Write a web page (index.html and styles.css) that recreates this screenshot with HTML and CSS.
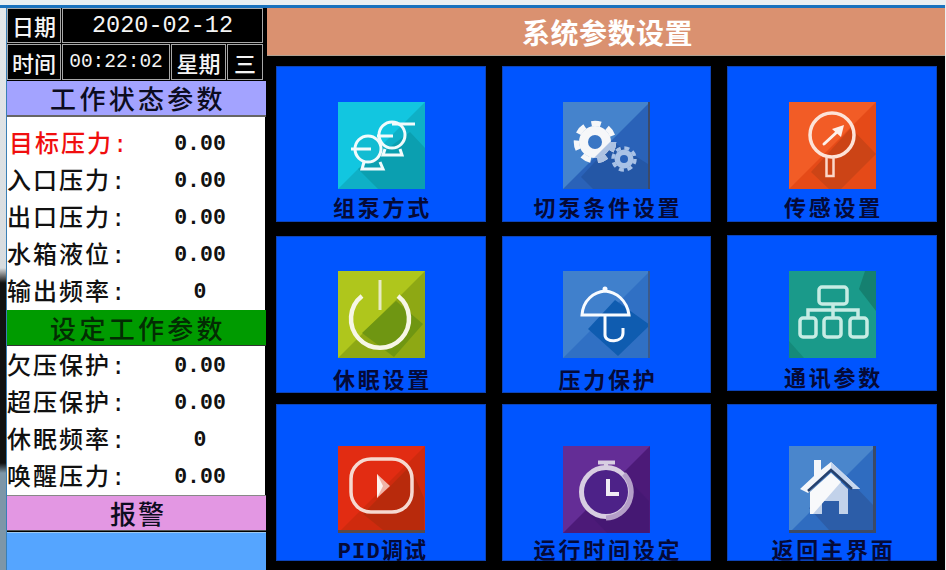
FILE: index.html
```html
<!DOCTYPE html>
<html lang="zh-CN">
<head>
    <meta charset="UTF-8">
    <title>系统参数设置</title>
    <link rel="stylesheet" href="styles.css">
</head>
<body>
    <div class="screen">
        <div class="gutter"></div>
        <div class="side">
            <div class="clock">
                <div class="clock-row row-date">
                    <div class="cell cell-name">日期</div>
                    <div class="cell cell-date">2020-02-12</div>
                </div>
                <div class="clock-row row-time">
                    <div class="cell cell-name">时间</div>
                    <div class="cell cell-time">00:22:02</div>
                    <div class="cell cell-week">星期</div>
                    <div class="cell cell-day">三</div>
                </div>
            </div>
            <div class="band band-purple">工作状态参数</div>
            <div class="params params-first">
                <div class="param"><span class="param-name param-red">目标压力:</span><span class="param-value">0.00</span></div>
                <div class="param"><span class="param-name">入口压力:</span><span class="param-value">0.00</span></div>
                <div class="param"><span class="param-name">出口压力:</span><span class="param-value">0.00</span></div>
                <div class="param"><span class="param-name">水箱液位:</span><span class="param-value">0.00</span></div>
                <div class="param"><span class="param-name">输出频率:</span><span class="param-value">0</span></div>
            </div>
            <div class="band band-green">设定工作参数</div>
            <div class="params">
                <div class="param"><span class="param-name">欠压保护:</span><span class="param-value">0.00</span></div>
                <div class="param"><span class="param-name">超压保护:</span><span class="param-value">0.00</span></div>
                <div class="param"><span class="param-name">休眠频率:</span><span class="param-value">0</span></div>
                <div class="param"><span class="param-name">唤醒压力:</span><span class="param-value">0.00</span></div>
            </div>
            <div class="band band-pink">报警</div>
            <div class="alarm"></div>
        </div>
        <div class="main">
            <h1 class="title">系统参数设置</h1>
            <div class="tiles">
                <div class="tile">
                    <svg class="icon" viewBox="0 0 87 87">
                        <rect width="87" height="87" fill="#0fb0c6"/>
                        <polygon points="0,0 87,0 0,87" fill="#12c6e0"/>
                        <polygon points="20,67 45,50 72,30 87,46 87,87 40,87" fill="#0b9fb0"/>
                        <g fill="none" stroke="#f2fbfc" stroke-width="3">
                            <circle cx="54" cy="33" r="13"/>
                            <path d="M54 22H77M39 34H55"/>
                            <path d="M47 47L45 53H64L62 47"/>
                            <circle cx="30" cy="47" r="13" fill="#12bcd2"/>
                            <path d="M13 47H33"/>
                            <path d="M26 60L24 67H45L42 60"/>
                        </g>
                    </svg>
                    <span class="tile-label">组泵方式</span>
                </div>
                <div class="tile">
                    <svg class="icon" viewBox="0 0 87 87">
                        <defs>
                            <clipPath id="gear-shade"><polygon points="87,0 87,87 0,87"/></clipPath>
                            <g id="gear-big">
                                <circle cx="32" cy="40" r="16"/>
                                <circle cx="32" cy="40" r="18.500" fill="none" stroke="currentColor" stroke-width="5.500" stroke-dasharray="9.500 7.100"/>
                            </g>
                        </defs>
                        <rect width="87" height="87" fill="#2a62b8"/>
                        <polygon points="0,0 87,0 0,87" fill="#4583cc"/>
                        <polygon points="18,75 50,40 85,62 85,87 30,87" fill="#2457a6"/>
                        <rect x="85" width="2" height="87" fill="#3c4a68"/>
                        <use href="#gear-big" fill="#f6f7f9" color="#f6f7f9"/>
                        <use href="#gear-big" fill="#adc2e2" color="#adc2e2" clip-path="url(#gear-shade)"/>
                        <circle cx="32" cy="40" r="7" fill="#3a76c4"/>
                        <circle cx="61" cy="57" r="9.500" fill="#a9c2e6"/>
                        <circle cx="61" cy="57" r="11" fill="none" stroke="#a9c2e6" stroke-width="3.500" stroke-dasharray="5 3.640"/>
                        <circle cx="61" cy="57" r="4" fill="#2a62b8"/>
                    </svg>
                    <span class="tile-label">切泵条件设置</span>
                </div>
                <div class="tile">
                    <svg class="icon" viewBox="0 0 87 87">
                        <rect width="87" height="87" fill="#e54a18"/>
                        <polygon points="0,0 87,0 0,87" fill="#f25c26"/>
                        <polygon points="22,70 62,26 87,52 52,87 40,87" fill="#cc4416"/>
                        <circle cx="43" cy="33" r="22" fill="none" stroke="#fde3d8" stroke-width="3.500"/>
                        <path d="M37.500 55V74H44.500V55" fill="none" stroke="#fbd8ca" stroke-width="2.500"/>
                        <path d="M35 42L48 30" stroke="#fdf0ea" stroke-width="3" stroke-linecap="round"/>
                        <polygon points="55,23 52,35 43,27" fill="#fdf0ea"/>
                    </svg>
                    <span class="tile-label">传感设置</span>
                </div>
                <div class="tile tile-mid">
                    <svg class="icon" viewBox="0 0 87 87">
                        <rect width="87" height="87" fill="#8ea814"/>
                        <polygon points="0,0 87,0 0,87" fill="#afc61c"/>
                        <polygon points="24,62 58,30 85,53 56,86" fill="#6f9612"/>
                        <path d="M24 25A29 29 0 1 0 60 25" fill="none" stroke="#f6f6e6" stroke-width="4.500"/>
                        <path d="M42 9V39" stroke="#e8ebc4" stroke-width="3"/>
                    </svg>
                    <span class="tile-label">休眠设置</span>
                </div>
                <div class="tile tile-mid">
                    <svg class="icon" viewBox="0 0 87 87">
                        <rect width="87" height="87" fill="#3070c4"/>
                        <polygon points="0,0 87,0 0,87" fill="#4080cc"/>
                        <polygon points="52,29 87,54 55,85 25,58" fill="#0f5cb0"/>
                        <rect x="85" width="2" height="87" fill="#3c5a8a"/>
                        <path d="M19 44C20 29 31 21 42 20C53 21 64 29 66 44Z" fill="none" stroke="#f8fbff" stroke-width="3"/>
                        <circle cx="42" cy="18" r="2.500" fill="#f8fbff"/>
                        <path d="M42 44V64C42 72 60 72 60 62V57" fill="none" stroke="#f8fbff" stroke-width="3"/>
                    </svg>
                    <span class="tile-label">压力保护</span>
                </div>
                <div class="tile tile-mid tile-short">
                    <svg class="icon" viewBox="0 0 87 87">
                        <rect width="87" height="87" fill="#1a9a8a"/>
                        <polygon points="87,0 87,40 70,18 76,0" fill="#158070"/>
                        <polygon points="0,70 15,87 0,87" fill="#158a7a"/>
                        <g fill="none" stroke="#c6ece4" stroke-width="3.500">
                            <rect x="30" y="16" width="28" height="17" rx="3"/>
                            <path d="M44 33V46M19 46V39H69V46"/>
                            <rect x="11" y="47" width="16" height="19" rx="3"/>
                            <rect x="35" y="47" width="17" height="19" rx="3"/>
                            <rect x="61" y="47" width="17" height="19" rx="3"/>
                        </g>
                    </svg>
                    <span class="tile-label">通讯参数</span>
                </div>
                <div class="tile tile-low">
                    <svg class="icon" viewBox="0 0 87 87">
                        <rect width="87" height="87" fill="#cf2a0e"/>
                        <polygon points="0,0 87,0 0,87" fill="#e22c12"/>
                        <polygon points="25,68 72,20 86,52 86,84 45,84" fill="#b82a0c"/>
                        <rect y="84" width="87" height="3" fill="#5a4a48"/>
                        <rect x="13" y="13" width="61" height="53" rx="20" fill="none" stroke="#f6d9d0" stroke-width="3.500"/>
                        <polygon points="39,28 39,52 52,40" fill="#f0b4a8"/>
                        <polygon points="39,28 39,52 45,40" fill="#fdf2ee"/>
                    </svg>
                    <span class="tile-label tile-label-tight">PID调试</span>
                </div>
                <div class="tile tile-low">
                    <svg class="icon" viewBox="0 0 87 87">
                        <rect width="87" height="87" fill="#4c1a78"/>
                        <polygon points="0,0 87,0 0,87" fill="#642d96"/>
                        <polygon points="22,64 60,28 86,55 86,87 44,87" fill="#431870" opacity="0.7"/>
                        <circle cx="43" cy="46" r="24.500" fill="#4d2288" stroke="#d8cee2" stroke-width="5"/>
                        <path d="M43 72A26 26 0 0 0 61 28" fill="none" stroke="#b49fc8" stroke-width="5"/>
                        <path d="M35 16.500H52M43 17V24" stroke="#d8cee2" stroke-width="4"/>
                        <path d="M45 33V48H56" fill="none" stroke="#f0ecf4" stroke-width="4"/>
                    </svg>
                    <span class="tile-label">运行时间设定</span>
                </div>
                <div class="tile tile-low">
                    <svg class="icon" viewBox="0 0 87 87">
                        <rect width="87" height="87" fill="#2f6cc0"/>
                        <polygon points="0,0 87,0 0,87" fill="#4a86cc"/>
                        <polygon points="20,62 62,36 85,60 85,84 40,84" fill="#2c5da8"/>
                        <rect x="84" width="3" height="87" fill="#3c4a66"/>
                        <rect y="84" width="87" height="3" fill="#3c4a66"/>
                        <polygon points="25,14 32,14 32,24 42,16 71,43 62,43 42,25 19,47 11,43 25,30" fill="#f4f6fa"/>
                        <polygon points="42,16 71,43 62,43 42,25" fill="#c6d6ee"/>
                        <path d="M19 45L42 24L63 43" fill="none" stroke="#24406e" stroke-width="2.500"/>
                        <polygon points="42,27 59,43 59,68 50,68 50,55 33,55 33,68 21,68 21,46" fill="#c2d2ea"/>
                        <polygon points="42,27 52,36 24,68 21,68 21,46" fill="#f8f9fb"/>
                    </svg>
                    <span class="tile-label">返回主界面</span>
                </div>
            </div>
        </div>
    </div>
</body>
</html>
```

FILE: styles.css
```css
html, body {
    margin: 0;
    height: 100%;
    overflow: hidden;
}
body {
    background: #e9eff2;
    font-family: "Liberation Mono", "Noto Sans CJK SC", monospace;
    box-sizing: border-box;
    padding: 5px 1px 2px 0;
}
.screen {
    display: flex;
    height: 563px;
    border-top: 3px solid #1a72bd;
    background: #000;
}
.gutter {
    width: 7px;
    flex: none;
    background: linear-gradient(#e4e8ea 0, #d8dcdf 260px, #111 275px, #111 455px, #7d96a8 465px, #7d96a8 100%);
    border-right: 1px solid #3a7fb5;
    box-sizing: border-box;
}
.side {
    width: 260px;
    flex: none;
    display: flex;
    flex-direction: column;
}
.clock {
    width: 256px;
    height: 72px;
    display: flex;
    flex-direction: column;
}
.clock-row {
    display: flex;
    flex: none;
}
.row-date { height: 35px; }
.row-time { height: 36px; margin-top: 1px; }
.cell {
    display: flex;
    align-items: center;
    justify-content: center;
    color: #f4f4f4;
    border: 1px solid #a8a8a8;
    box-sizing: border-box;
    margin-right: 1px;
    font-size: 22px;
    font-weight: 500;
    white-space: nowrap;
}
.cell-name { width: 54px; }
.cell-date {
    flex: 1;
    margin-right: 0;
    font-size: 23.500px;
}
.cell-time {
    width: 108px;
    font-size: 19.500px;
}
.cell-week { width: 55px; }
.cell-day { flex: 1; margin-right: 0; }
.band {
    flex: none;
    height: 36px;
    margin-right: 1px;
    padding-left: 3px;
    box-sizing: border-box;
    display: flex;
    align-items: center;
    justify-content: center;
    font-size: 26px;
    font-weight: 500;
    letter-spacing: 3.300px;
    color: #0c0c20;
}
.band-purple {
    background: #a3a3ff;
    margin-top: 1px;
    border-bottom: 2px solid #666;
}
.band-green {
    background: #009b00;
    border-bottom: 1px solid #333;
    color: #032c03;
}
.band-pink {
    background: #e397e3;
    border-top: 1px solid #888;
    border-bottom: 1px solid #555;
    letter-spacing: 2px;
}
.params {
    background: #fff;
    flex: none;
    height: 149px;
    margin-right: 2px;
}
.params-first {
    height: 193px;
    padding-top: 7px;
    box-sizing: border-box;
}
.param {
    display: grid;
    grid-template-columns: 126px 132px;
    height: 37px;
    align-items: center;
    font-size: 24px;
    color: #111;
}
.param-name {
    font-weight: 500;
    letter-spacing: 2px;
    padding-bottom: 8px;
    white-space: nowrap;
}
.param-red {
    color: #f00e0e;
    padding-left: 2px;
}
.param-value {
    text-align: center;
    padding: 0 0 3px 2px;
    font-size: 21.500px;
    font-weight: 700;
}
.alarm {
    flex: 1;
    margin-top: 1px;
    margin-right: 1px;
    background: #55a5ff;
    border-top: 1px solid #9cc8f0;
}
.main {
    flex: 1;
    display: flex;
    flex-direction: column;
}
.title {
    margin: 0;
    height: 48px;
    flex: none;
    display: flex;
    align-items: center;
    justify-content: center;
    background: #da9170;
    border-bottom: 1px solid #b0a090;
    box-sizing: border-box;
    color: #fff;
    font-size: 28px;
    font-weight: 700;
    letter-spacing: 0.500px;
    padding-left: 3px;
}
.tiles {
    display: grid;
    grid-template-columns: 210px 209px 210px;
    grid-template-rows: 156px 157px 157px;
    column-gap: 16px;
    row-gap: 14px;
    padding: 10px 0 0 9px;
}
.tile {
    background: #0055ff;
    display: flex;
    flex-direction: column;
    align-items: center;
    padding-top: 35px;
    box-sizing: border-box;
    border: 1px solid #0d44b8;
}
.tile-mid { padding-top: 34px; }
.tile-short {
    height: 156px;
    margin-top: -1px;
    padding-top: 35px;
}
.tile-low {
    margin-top: -3px;
    margin-bottom: 3px;
    padding-top: 41px;
}
.icon {
    width: 87px;
    height: 87px;
    flex: none;
}
.tile-label {
    margin-top: 13px;
    padding-left: 3px;
    line-height: 18px;
    font-size: 22px;
    font-weight: 700;
    letter-spacing: 2.800px;
    color: #050a38;
    white-space: nowrap;
}
.tile-mid .tile-label { margin-top: 16px; }
.tile-short .tile-label { margin-top: 14px; }
.tile-low .tile-label {
    margin-top: 13px;
    line-height: 14px;
}
.tile-label-tight { letter-spacing: 1.200px; }
```
